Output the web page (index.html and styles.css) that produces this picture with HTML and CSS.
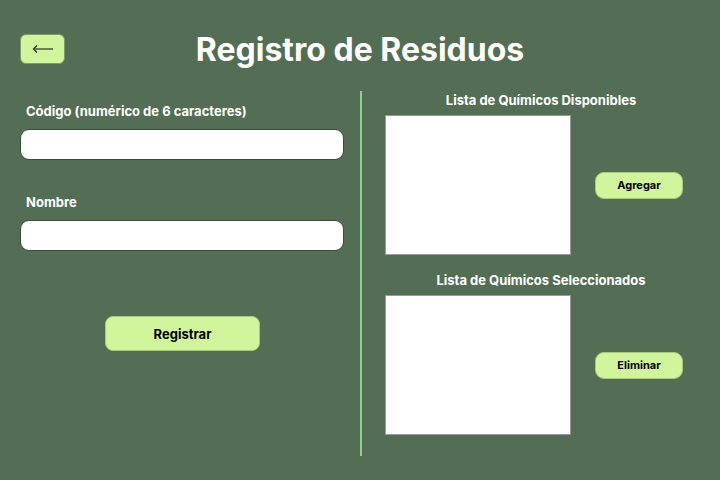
FILE: index.html
```html
<!DOCTYPE html>
<html lang="es">
<head>
<meta charset="utf-8">
<link rel="stylesheet" href="styles.css">
</head>
<body>
<div class="page">
  <header class="header">
    <button class="back" aria-label="Volver">
      <svg width="22" height="10" viewBox="0 0 22 10"><path d="M2 5H21" stroke="#556048" stroke-width="1.6" fill="none"/><path d="M5 1.5L1.5 5L5 8.5" stroke="#2b3322" stroke-width="1.3" fill="none"/></svg>
    </button>
    <h1 class="title">Registro de Residuos</h1>
  </header>
  <main class="main">
    <section class="left">
      <label class="label">Código (numérico de 6 caracteres)</label>
      <input class="input" type="text">
      <label class="label label2">Nombre</label>
      <input class="input" type="text">
      <div class="submit-row"><button class="btn-main">Registrar</button></div>
    </section>
    <div class="divider"></div>
    <section class="right">
      <div class="list-block">
        <h2 class="list-title">Lista de Químicos Disponibles</h2>
        <div class="list-row">
          <div class="listbox"></div>
          <button class="btn-small">Agregar</button>
        </div>
      </div>
      <div class="list-block block2">
        <h2 class="list-title">Lista de Químicos Seleccionados</h2>
        <div class="list-row">
          <div class="listbox"></div>
          <button class="btn-small">Eliminar</button>
        </div>
      </div>
    </section>
  </main>
</div>
</body>
</html>
```
FILE: styles.css
```css
* { box-sizing: border-box; }
html, body { margin: 0; padding: 0; }
body {
  width: 720px;
  height: 480px;
  background: #546d55;
  font-family: Inter, "Noto Sans", sans-serif;
  overflow: hidden;
}
.page { padding: 34px 0 0 0; }
.header {
  position: relative;
  height: 30px;
  display: flex;
  justify-content: center;
  align-items: center;
}
.back {
  position: absolute;
  left: 20px;
  top: 0;
  width: 45px;
  height: 30px;
  border: 1px solid #7f9a6a;
  border-radius: 6px;
  background: #d1f59c;
  display: flex;
  align-items: center;
  justify-content: center;
  padding: 0;
}
.title {
  margin: 0;
  color: #fff;
  font-size: 32px;
  font-weight: 700;
  line-height: 30px;
  letter-spacing: 0;
  position: relative;
  top: 1px;
}
.main {
  display: flex;
  margin-top: 27px;
}
.left {
  width: 360px;
  padding: 0 16px 0 20px;
  display: flex;
  flex-direction: column;
}
.label {
  color: #fff;
  font-size: 13px;
  font-weight: 700;
  padding-left: 6px;
  margin-top: 12px;
  line-height: 16px;
}
.label2 { margin-top: 34px; }
.input {
  margin-top: 10px;
  width: 324px;
  height: 31px;
  border: 1px solid #3c4a3c;
  border-radius: 9px;
  background: #fff;
}
.submit-row {
  display: flex;
  padding-left: 85px;
  margin-top: 65px;
}
.btn-main {
  width: 155px;
  height: 35px;
  background: #d1f59c;
  border: 1px solid #a9c87f;
  border-radius: 8px;
  font-family: Inter, sans-serif;
  font-weight: 700;
  font-size: 13px;
  color: #000;
}
.divider {
  width: 2px;
  height: 365px;
  background: #8fd18f;
  margin-top: 0;
}
.right {
  flex: 1;
  padding-left: 23px;
}
.list-title {
  margin: 0;
  color: #fff;
  font-size: 13px;
  font-weight: 700;
  line-height: 16px;
  text-align: center;
  width: 312px;
  margin-left: 0;
  padding-top: 1px;
}
.block2 { margin-top: 16px; }
.list-row {
  display: flex;
  align-items: center;
  margin-top: 7px;
}
.listbox {
  width: 186px;
  height: 140px;
  background: #fff;
  border: 1px solid #9a9a9a;
}
.btn-small {
  margin-left: 24px;
  width: 88px;
  height: 27px;
  background: #d1f59c;
  border: 1px solid #a9c87f;
  border-radius: 9px;
  font-family: Inter, sans-serif;
  font-weight: 700;
  font-size: 11px;
  color: #000;
  padding: 0;
}
```
